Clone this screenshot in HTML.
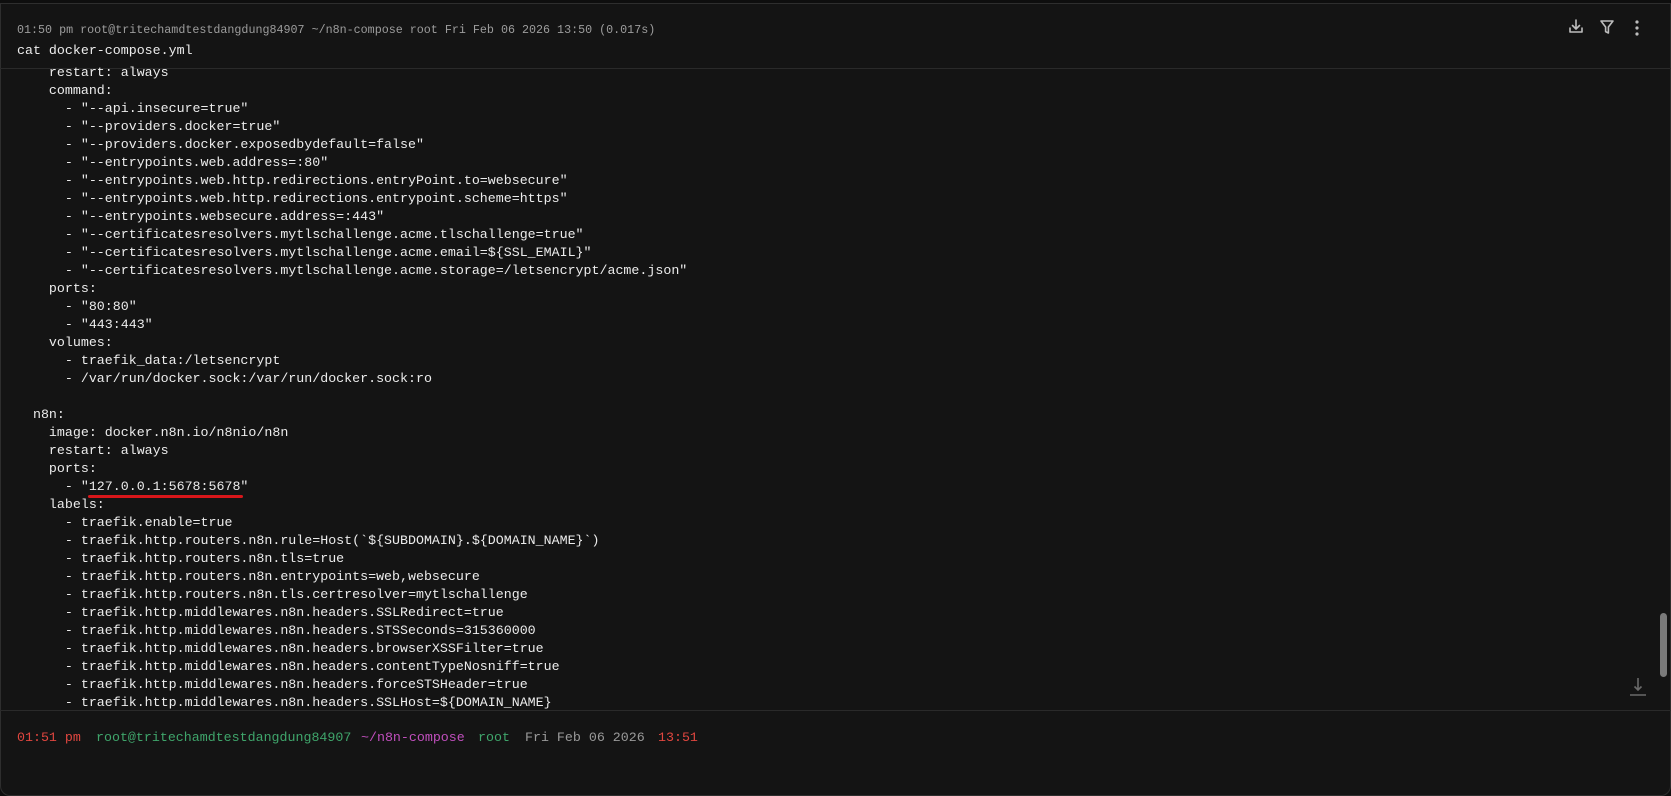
<!DOCTYPE html>
<html><head><meta charset="utf-8"><style>
html,body{margin:0;padding:0;background:#0e0e0e;}
body{width:1671px;height:796px;position:relative;overflow:hidden;font-family:"Liberation Mono",monospace;}
.frame{position:absolute;left:0;top:3px;width:1669px;height:791px;background:#141414;border:1px solid #2e2e2e;border-radius:0 0 10px 10px;}
.hdr{position:absolute;left:17px;top:23px;font-size:11.7px;color:#9d9d9d;white-space:pre;}
.cmd{position:absolute;left:17px;top:43px;font-size:13.3px;color:#ececec;white-space:pre;}
.sep{position:absolute;left:0;width:1671px;height:1px;background:#2a2a2a;}
.content{position:absolute;left:17px;top:64px;font-size:13.3px;line-height:18px;color:#ececec;white-space:pre;}
.p{position:absolute;top:730px;font-size:13.3px;white-space:pre;}
</style></head><body>
<div class="frame"></div>
<div class="hdr">01:50 pm root@tritechamdtestdangdung84907 ~/n8n-compose root Fri Feb 06 2026 13:50 (0.017s)</div>
<div class="cmd">cat docker-compose.yml</div>
<div class="sep" style="top:68px"></div>
<div class="content">    restart: always
    command:
      - "--api.insecure=true"
      - "--providers.docker=true"
      - "--providers.docker.exposedbydefault=false"
      - "--entrypoints.web.address=:80"
      - "--entrypoints.web.http.redirections.entryPoint.to=websecure"
      - "--entrypoints.web.http.redirections.entrypoint.scheme=https"
      - "--entrypoints.websecure.address=:443"
      - "--certificatesresolvers.mytlschallenge.acme.tlschallenge=true"
      - "--certificatesresolvers.mytlschallenge.acme.email=${SSL_EMAIL}"
      - "--certificatesresolvers.mytlschallenge.acme.storage=/letsencrypt/acme.json"
    ports:
      - "80:80"
      - "443:443"
    volumes:
      - traefik_data:/letsencrypt
      - /var/run/docker.sock:/var/run/docker.sock:ro

  n8n:
    image: docker.n8n.io/n8nio/n8n
    restart: always
    ports:
      - "127.0.0.1:5678:5678"
    labels:
      - traefik.enable=true
      - traefik.http.routers.n8n.rule=Host(`${SUBDOMAIN}.${DOMAIN_NAME}`)
      - traefik.http.routers.n8n.tls=true
      - traefik.http.routers.n8n.entrypoints=web,websecure
      - traefik.http.routers.n8n.tls.certresolver=mytlschallenge
      - traefik.http.middlewares.n8n.headers.SSLRedirect=true
      - traefik.http.middlewares.n8n.headers.STSSeconds=315360000
      - traefik.http.middlewares.n8n.headers.browserXSSFilter=true
      - traefik.http.middlewares.n8n.headers.contentTypeNosniff=true
      - traefik.http.middlewares.n8n.headers.forceSTSHeader=true
      - traefik.http.middlewares.n8n.headers.SSLHost=${DOMAIN_NAME}</div>
<div style="position:absolute;left:88px;top:495px;width:155px;height:3px;background:#d8161a;border-radius:2px"></div>
<div class="sep" style="top:710px"></div>
<span class="p" style="left:17px;color:#e0463f">01:51 pm</span>
<span class="p" style="left:96px;color:#3fa56b">root@tritechamdtestdangdung84907</span>
<span class="p" style="left:361px;color:#c04fbd">~/n8n-compose</span>
<span class="p" style="left:478px;color:#3fa56b">root</span>
<span class="p" style="left:525px;color:#9a9a9a">Fri Feb 06 2026</span>
<span class="p" style="left:658px;color:#e0463f">13:51</span>
<svg style="position:absolute;left:1567px;top:17px" width="90" height="22" viewBox="0 0 90 22" fill="none" stroke="#bdbdbd" stroke-width="1.6" stroke-linecap="round" stroke-linejoin="round">
<path d="M9 3v9M5.5 8.5L9 12l3.5-3.5M3 11v4h12v-4"/>
<path d="M34 4h12l-4.6 6v6l-2.8-1.4V10z"/>
<circle cx="70" cy="5" r="0.8" fill="#bdbdbd"/><circle cx="70" cy="11" r="0.8" fill="#bdbdbd"/><circle cx="70" cy="17" r="0.8" fill="#bdbdbd"/>
</svg>
<div style="position:absolute;left:1660px;top:613px;width:7px;height:64px;background:#7a7a7a;border-radius:4px"></div>
<svg style="position:absolute;left:1628px;top:676px" width="20" height="22" viewBox="0 0 20 22" fill="none" stroke="#6a6a6a" stroke-width="1.6"><path d="M10 2v12M6.5 10.5L10 14l3.5-3.5M2 19h16"/></svg>
</body></html>
